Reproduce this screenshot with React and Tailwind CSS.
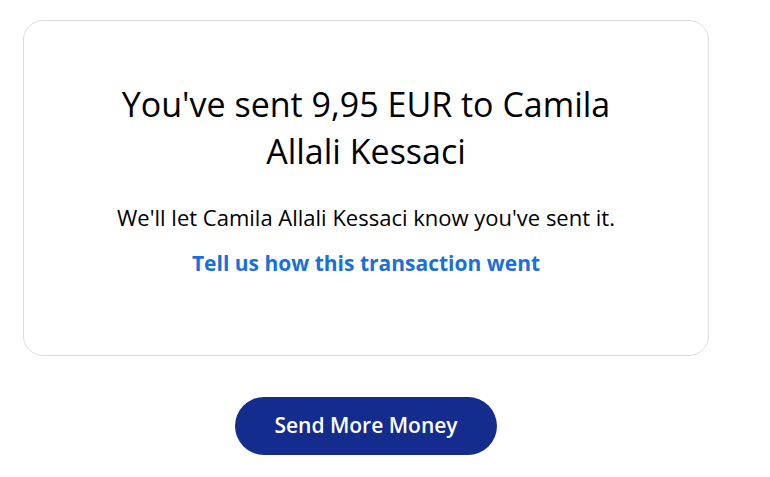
export default function App() {
  return (
    <div className="min-h-screen bg-white font-['Open_Sans',sans-serif] text-[#001435]">
      <div className="w-[686px] ml-[23px] pt-[20px] flex flex-col items-center">
        <div className="w-full h-[336px] rounded-[20px] border border-[#dcdcdc] flex flex-col items-center pt-[60px] px-[60px]">
          <h1 className="text-center text-[34px] leading-[47px] text-black max-w-[540px]">
            You've sent 9,95 EUR to Camila Allali Kessaci
          </h1>
          <p className="mt-[28px] text-[22px] leading-[28px] text-black">
            We'll let Camila Allali Kessaci know you've sent it.
          </p>
          <a href="#" className="mt-[18px] text-[21px] leading-[28px] font-bold text-[#1a6fd8]">
            Tell us how this transaction went
          </a>
        </div>
        <button className="mt-[41px] w-[262px] h-[58px] rounded-full bg-[#142c8e] text-white text-[21px] font-semibold">
          Send More Money
        </button>
      </div>
    </div>
  );
}
